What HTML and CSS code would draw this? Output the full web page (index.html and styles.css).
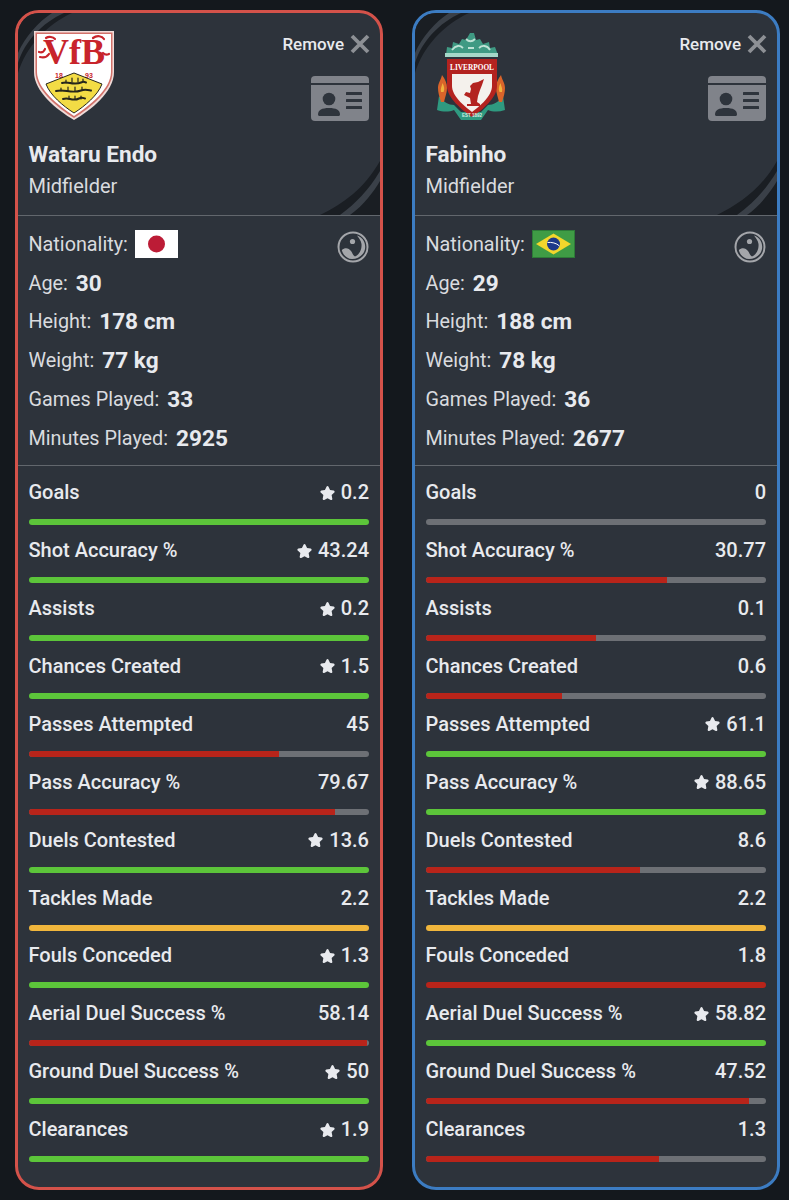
FILE: index.html
```html
<!DOCTYPE html>
<html lang="en">
<head>
<meta charset="utf-8">
<title>Player comparison</title>
<link rel="stylesheet" href="styles.css">
</head>
<body>
<svg class="defs" width="0" height="0" aria-hidden="true">
  <symbol id="star" viewBox="0 0 24 24"><path d="M12 1.600c.7 0 1.300.4 1.600 1.100l2.500 5.400 5.800.8c1.500.2 2 2 1 3l-4.300 4.200 1.100 6c.2 1.400-1.300 2.500-2.500 1.800L12 21l-5.200 2.900c-1.300.7-2.800-.4-2.500-1.800l1.100-6-4.300-4.200c-1-1-.5-2.800 1-3l5.800-.8 2.500-5.400c.3-.7.900-1.100 1.600-1.100z"/></symbol>
  <symbol id="close" viewBox="0 0 20 20"><path d="M2 2 18 18M18 2 2 18" fill="none" stroke="currentColor" stroke-width="3.800"/></symbol>
  <symbol id="idcard" viewBox="0 0 58 45">
    <path d="M4 0h50a4 4 0 0 1 4 4v3H0V4a4 4 0 0 1 4-4z"/>
    <path d="M0 9h58v32a4 4 0 0 1-4 4H4a4 4 0 0 1-4-4z"/>
    <g fill="#2e343c">
      <circle cx="18" cy="23" r="6.300"/>
      <path d="M7 38.500c0-4.500 4-6.500 11-6.500s11 2 11 6.500c0 .8-.6 1.500-1.500 1.500h-19c-.9 0-1.500-.7-1.500-1.500z"/>
      <rect x="35" y="16" width="16" height="3" rx=".6"/>
      <rect x="35" y="23" width="16" height="3" rx=".6"/>
      <rect x="35" y="30" width="16" height="3" rx=".6"/>
    </g>
  </symbol>
  <symbol id="yinyang" viewBox="0 0 32 32">
    <circle cx="16" cy="16" r="14.500" fill="none" stroke="currentColor" stroke-width="2"/>
    <path d="M20 4.500C26 6.500 29 12 28 18 27 24 21 28 15 28 10 28 6 24 4.800 19 8 16 12 17 14 20 15.500 22 16 24.500 18 25.500 22 24 25 19 24.500 13 24 9.500 22 7 20 4.500z"/>
    <circle cx="15.500" cy="10.500" r="2.600"/>
  </symbol>
  <symbol id="swoosh" viewBox="0 0 362 202" preserveAspectRatio="none">
    <path d="M0 0H54C28 12 8 34 0 60z" fill="#1a1e23"/>
    <path d="M46 0C24 10 7 28 0 50V40C7 24 20 9 34 0z" fill="#3a4048"/>
    <path d="M362 148C346 176 326 190 302 202H362z" fill="#1a1e23"/>
    <path d="M362 158C350 178 338 190 322 202H332C346 192 356 178 362 168z" fill="#3a4048"/>
  </symbol>
</svg>

<main class="compare">
  <!-- Wataru Endo -->
  <article class="card card-red">
    <header class="head">
      <svg class="swoosh"><use href="#swoosh"/></svg>
      <div class="head-top">
        <svg class="crest" viewBox="0 0 82 90" role="img" aria-label="VfB Stuttgart crest">
          <path d="M1 1H81V42C81 62 58 80 41 90 24 80 1 62 1 42z" fill="#f0dcd9"/>
          <path d="M2.500 2.500H79.500V42C79.500 60 57 78 41 88 25 78 2.500 60 2.500 42z" fill="#d2716a"/>
          <path d="M4 4H78V42C78 59 56 76 41 86 26 76 4 59 4 42z" fill="#fff"/>
          <text class="crest-vfb" x="41" y="34" text-anchor="middle" textLength="62" lengthAdjust="spacingAndGlyphs">VfB</text>
          <g fill="none" stroke="#c8242b" stroke-width="2.200" stroke-linecap="round">
            <path d="M6 22c3 1 5 0 6-3M7 27c4 1 7 0 9-3M13 8c3-2 7-1 9 1M60 8c4-3 9-2 11 1M70 23c2 2 4 2 6 1"/>
          </g>
          <text class="crest-year" x="22" y="48">18</text>
          <text class="crest-year" x="52" y="48">93</text>
          <path d="M13 54 41 43 69 54C65 65 52 76 41 83 30 76 17 65 13 54z" fill="#f3dc45" stroke="#26261c" stroke-width="1"/>
          <g fill="none" stroke="#26261c" stroke-width="2" stroke-linecap="round">
            <path d="M29 53c3-1 6-.5 8 0s8 1 11-.5 4-.5 5 0"/>
            <path d="M23 61c4-1 8-.5 11 0s10 1 14-.5 7-.5 10 0"/>
            <path d="M30 69c3-1 5-.5 7 0s6 1 9-.5 4-.5 6 0"/>
            <path d="M33 50v3M39 48v4M45 48v4M50 49v3M28 58v3M35 57v4M42 57v4M49 57v3M36 66v3M42 66v3M48 66v3" stroke-width="1.200"/>
          </g>
        </svg>
        <div class="head-actions">
          <div class="remove"><span>Remove</span><svg class="close"><use href="#close"/></svg></div>
          <svg class="idcard"><use href="#idcard"/></svg>
        </div>
      </div>
      <h2 class="name">Wataru Endo</h2>
      <p class="role">Midfielder</p>
    </header>
    <section class="info">
      <svg class="yinyang"><use href="#yinyang"/></svg>
      <div class="info-row"><span>Nationality:</span>
        <svg class="flag" viewBox="0 0 43 28" role="img" aria-label="Japan"><rect width="43" height="28" fill="#fff"/><circle cx="21.500" cy="14" r="8.500" fill="#bc1c36"/></svg>
      </div>
      <div class="info-row"><span>Age:</span><b>30</b></div>
      <div class="info-row"><span>Height:</span><b>178 cm</b></div>
      <div class="info-row"><span>Weight:</span><b>77 kg</b></div>
      <div class="info-row"><span>Games Played:</span><b>33</b></div>
      <div class="info-row"><span>Minutes Played:</span><b>2925</b></div>
    </section>
    <section class="stats">
      <div class="stat"><div class="stat-line"><span>Goals</span><span class="val"><svg class="star"><use href="#star"/></svg>0.2</span></div><div class="bar"><i class="fill green" style="width:100%"></i></div></div>
      <div class="stat"><div class="stat-line"><span>Shot Accuracy %</span><span class="val"><svg class="star"><use href="#star"/></svg>43.24</span></div><div class="bar"><i class="fill green" style="width:100%"></i></div></div>
      <div class="stat"><div class="stat-line"><span>Assists</span><span class="val"><svg class="star"><use href="#star"/></svg>0.2</span></div><div class="bar"><i class="fill green" style="width:100%"></i></div></div>
      <div class="stat"><div class="stat-line"><span>Chances Created</span><span class="val"><svg class="star"><use href="#star"/></svg>1.5</span></div><div class="bar"><i class="fill green" style="width:100%"></i></div></div>
      <div class="stat"><div class="stat-line"><span>Passes Attempted</span><span class="val">45</span></div><div class="bar"><i class="fill red" style="width:73.500%"></i></div></div>
      <div class="stat"><div class="stat-line"><span>Pass Accuracy %</span><span class="val">79.67</span></div><div class="bar"><i class="fill red" style="width:90%"></i></div></div>
      <div class="stat"><div class="stat-line"><span>Duels Contested</span><span class="val"><svg class="star"><use href="#star"/></svg>13.6</span></div><div class="bar"><i class="fill green" style="width:100%"></i></div></div>
      <div class="stat"><div class="stat-line"><span>Tackles Made</span><span class="val">2.2</span></div><div class="bar"><i class="fill yellow" style="width:100%"></i></div></div>
      <div class="stat"><div class="stat-line"><span>Fouls Conceded</span><span class="val"><svg class="star"><use href="#star"/></svg>1.3</span></div><div class="bar"><i class="fill green" style="width:100%"></i></div></div>
      <div class="stat"><div class="stat-line"><span>Aerial Duel Success %</span><span class="val">58.14</span></div><div class="bar"><i class="fill red" style="width:99.500%"></i></div></div>
      <div class="stat"><div class="stat-line"><span>Ground Duel Success %</span><span class="val"><svg class="star"><use href="#star"/></svg>50</span></div><div class="bar"><i class="fill green" style="width:100%"></i></div></div>
      <div class="stat"><div class="stat-line"><span>Clearances</span><span class="val"><svg class="star"><use href="#star"/></svg>1.9</span></div><div class="bar"><i class="fill green" style="width:100%"></i></div></div>
    </section>
  </article>

  <!-- Fabinho -->
  <article class="card card-blue">
    <header class="head">
      <svg class="swoosh"><use href="#swoosh"/></svg>
      <div class="head-top">
        <svg class="crest" viewBox="0 0 82 90" role="img" aria-label="Liverpool FC crest">
          <path d="M16 25 17 17 22 18 23 12 29 14 32 9 36 10 40 3 44 3 46 10 50 9 53 14 59 12 60 18 65 17 68 25z" fill="#3f9a83"/>
          <path d="M22 20c4-5 8-5 11-2M36 9c3 3 6 3 9 0M49 18c3-3 8-3 11 2M38 18h6" stroke="#bfe3d6" stroke-width="1.800" fill="none"/>
          <rect x="15" y="23" width="53" height="4" fill="#a5d8c8"/>
          <path d="M9 66 C13 72 19 75 24 75L31 82H51L58 75C63 75 69 72 73 66L75 80C69 82 63 82 58 80L51 90H31L24 80C19 82 13 82 7 80z" fill="#2f9a80"/>
          <path d="M11 72C9 66 8 62 8 58 8 53 11 50 12 45 15 49 17 53 17 58 17 63 15 67 14 72z" fill="#d9642a"/>
          <path d="M11 62C10 59 12 56 12.500 53 14 56 15 59 13.500 62z" fill="#f0b23c"/>
          <path d="M72 72C74 66 75 62 75 58 75 53 72 50 71 45 68 49 66 53 66 58 66 63 68 67 69 72z" fill="#d9642a"/>
          <path d="M72 62C73 59 71 56 70.500 53 69 56 68 59 69.500 62z" fill="#f0b23c"/>
          <path d="M17 29H67V56C67 68 52 80 42 87 32 80 17 68 17 56z" fill="#b3231f"/>
          <path d="M22 44H62V56C62 66 50 76 42 82 34 76 22 66 22 56z" fill="#f4f1ec"/>
          <text class="crest-lfc" x="42" y="40" text-anchor="middle" textLength="44" lengthAdjust="spacingAndGlyphs">LIVERPOOL</text>
          <path d="M48 52 54 49 52 55 50 60 48 66 47 72 50 74V76H37V74H41L40 68 34 65 36 62 40 63 41 59 40 56 43 53z" fill="#b3231f"/>
          <text class="crest-est" x="42" y="86.500" text-anchor="middle">EST 1892</text>
        </svg>
        <div class="head-actions">
          <div class="remove"><span>Remove</span><svg class="close"><use href="#close"/></svg></div>
          <svg class="idcard"><use href="#idcard"/></svg>
        </div>
      </div>
      <h2 class="name">Fabinho</h2>
      <p class="role">Midfielder</p>
    </header>
    <section class="info">
      <svg class="yinyang"><use href="#yinyang"/></svg>
      <div class="info-row"><span>Nationality:</span>
        <svg class="flag" viewBox="0 0 43 28" role="img" aria-label="Brazil"><rect width="43" height="28" fill="#3f9c45"/><rect x=".5" y=".5" width="42" height="27" fill="none" stroke="#2d7a38"/><path d="M21.500 3.500 39 14 21.500 24.500 4 14z" fill="#f2d72c"/><circle cx="21.500" cy="14" r="6.500" fill="#1d3a8a"/><path d="M15.500 12.500c4-.5 9 .5 12 3.500" stroke="#fff" stroke-width="1" fill="none"/></svg>
      </div>
      <div class="info-row"><span>Age:</span><b>29</b></div>
      <div class="info-row"><span>Height:</span><b>188 cm</b></div>
      <div class="info-row"><span>Weight:</span><b>78 kg</b></div>
      <div class="info-row"><span>Games Played:</span><b>36</b></div>
      <div class="info-row"><span>Minutes Played:</span><b>2677</b></div>
    </section>
    <section class="stats">
      <div class="stat"><div class="stat-line"><span>Goals</span><span class="val">0</span></div><div class="bar"></div></div>
      <div class="stat"><div class="stat-line"><span>Shot Accuracy %</span><span class="val">30.77</span></div><div class="bar"><i class="fill red" style="width:71%"></i></div></div>
      <div class="stat"><div class="stat-line"><span>Assists</span><span class="val">0.1</span></div><div class="bar"><i class="fill red" style="width:50%"></i></div></div>
      <div class="stat"><div class="stat-line"><span>Chances Created</span><span class="val">0.6</span></div><div class="bar"><i class="fill red" style="width:40%"></i></div></div>
      <div class="stat"><div class="stat-line"><span>Passes Attempted</span><span class="val"><svg class="star"><use href="#star"/></svg>61.1</span></div><div class="bar"><i class="fill green" style="width:100%"></i></div></div>
      <div class="stat"><div class="stat-line"><span>Pass Accuracy %</span><span class="val"><svg class="star"><use href="#star"/></svg>88.65</span></div><div class="bar"><i class="fill green" style="width:100%"></i></div></div>
      <div class="stat"><div class="stat-line"><span>Duels Contested</span><span class="val">8.6</span></div><div class="bar"><i class="fill red" style="width:63%"></i></div></div>
      <div class="stat"><div class="stat-line"><span>Tackles Made</span><span class="val">2.2</span></div><div class="bar"><i class="fill yellow" style="width:100%"></i></div></div>
      <div class="stat"><div class="stat-line"><span>Fouls Conceded</span><span class="val">1.8</span></div><div class="bar"><i class="fill red" style="width:100%"></i></div></div>
      <div class="stat"><div class="stat-line"><span>Aerial Duel Success %</span><span class="val"><svg class="star"><use href="#star"/></svg>58.82</span></div><div class="bar"><i class="fill green" style="width:100%"></i></div></div>
      <div class="stat"><div class="stat-line"><span>Ground Duel Success %</span><span class="val">47.52</span></div><div class="bar"><i class="fill red" style="width:95%"></i></div></div>
      <div class="stat"><div class="stat-line"><span>Clearances</span><span class="val">1.3</span></div><div class="bar"><i class="fill red" style="width:68.500%"></i></div></div>
    </section>
  </article>
</main>
</body>
</html>
```
FILE: styles.css
```css
* { box-sizing: border-box; }
html, body { margin: 0; padding: 0; }
body {
  background: #14181d;
  color: #e8eaee;
  font-family: Roboto, "Liberation Sans", sans-serif;
  height: 1200px;
  overflow: hidden;
}
.defs { position: absolute; }
.compare {
  display: flex;
  gap: 29px;
  padding: 10px 0 0 15px;
}
.card {
  width: 368px;
  height: 1180px;
  background: #2d333b;
  border: 3px solid;
  border-radius: 24px;
  overflow: hidden;
  flex: none;
}
.card-red { border-color: #d4524a; }
.card-blue { border-color: #3c7cc2; }

.head {
  position: relative;
  height: 203px;
  padding: 0 11px 0 10.500px;
  border-bottom: 1px solid #62676d;
}
.swoosh { position: absolute; left: 0; top: 0; width: 100%; height: 202px; }
.head-top {
  position: relative;
  display: flex;
  justify-content: space-between;
  height: 127px;
  padding-top: 17px;
}
.crest { width: 82px; height: 90px; margin-left: 4.500px; }
.crest-vfb { font: 700 36px "Liberation Serif", serif; fill: #c8242b; }
.crest-year { font: 700 7px "Liberation Sans", sans-serif; fill: #c8242b; }
.crest-lfc { font: 700 9px "Liberation Serif", serif; fill: #fff; }
.crest-est { font: 700 4.500px "Liberation Sans", sans-serif; fill: #d7efe6; }

.head-actions {
  display: flex;
  flex-direction: column;
  align-items: flex-end;
}
.remove {
  display: flex;
  align-items: center;
  gap: 6px;
  height: 20px;
  margin-top: 4px;
  font-size: 17px;
  font-weight: 500;
  color: #e8eaee;
}
.close { width: 20px; height: 20px; margin-right: -1px; color: #8d9095; }
.idcard { width: 58px; height: 45px; margin-top: 22px; fill: #80838a; }

.name {
  position: relative;
  margin: 0;
  font-size: 22.600px;
  font-weight: 700;
  line-height: 30px;
  color: #e8eaee;
}
.role {
  position: relative;
  margin: 2px 0 0;
  font-size: 20px;
  font-weight: 400;
  line-height: 28px;
  color: #d9dbdf;
}

.info {
  position: relative;
  height: 250px;
  padding: 9px 11px 0 10.500px;
  border-bottom: 1px solid #62676d;
}
.info-row {
  display: flex;
  align-items: center;
  gap: 8px;
  height: 38.800px;
  font-size: 19.800px;
  color: #d9dbdf;
}
.info-row b { font-size: 22.600px; font-weight: 700; color: #e8eaee; }
.flag { width: 43px; height: 28px; margin-left: -1px; }
.yinyang {
  position: absolute;
  top: 15px;
  right: 11px;
  width: 32px;
  height: 32px;
  color: #a4a6aa;
  fill: #a4a6aa;
}

.stats { padding: 7.300px 11px 0 10.500px; }
.stat {
  height: 57.900px;
  display: flex;
  flex-direction: column;
}
.stat-line {
  display: flex;
  justify-content: space-between;
  align-items: center;
  height: 38px;
  font-size: 20px;
  font-weight: 500;
  color: #e8eaee;
}
.val { display: flex; align-items: center; gap: 6px; }
.star { width: 15px; height: 15px; fill: #e8eaee; }
.bar {
  height: 6px;
  margin-top: 8px;
  background: #6d7075;
  border-radius: 3px;
  overflow: hidden;
}
.fill { display: block; height: 100%; }
.green { background: #5cc53a; }
.red { background: #b8241a; }
.yellow { background: #f0b63c; }
```
